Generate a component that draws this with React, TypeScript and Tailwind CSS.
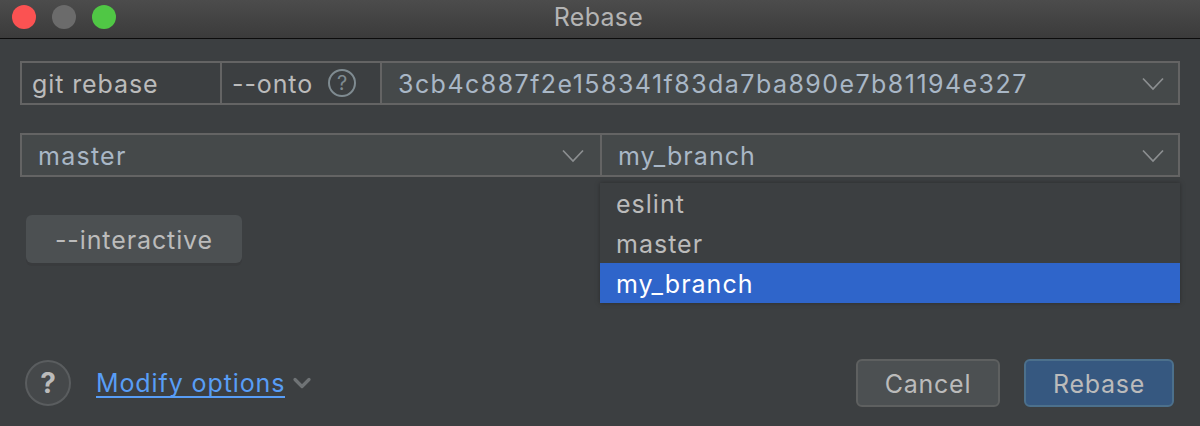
import { ChevronDown } from 'lucide-react'

const font = { fontFamily: 'Inter, "Liberation Sans", sans-serif' }

function Chevron() {
  return (
    <svg width="24" height="16" viewBox="0 0 24 16" fill="none" className="mt-[1px] text-[#8c8f91]">
      <path d="M2 2.5L12 13L22 2.5" stroke="currentColor" strokeWidth="1.7" />
    </svg>
  )
}

function ComboField({ value, className }: { value: string; className: string }) {
  return (
    <div className={`flex items-center justify-between bg-[#45494a] border-[#646464] ${className}`}>
      <span className="pt-[2px]">{value}</span>
      <Chevron />
    </div>
  )
}

export default function App() {
  return (
    <div
      style={font}
      className="relative flex h-[426px] w-[1200px] flex-col overflow-hidden bg-[#3c3f41] text-[25px] leading-none tracking-[0.036em] text-[#bbbbbb]"
    >
      {/* Title bar */}
      <div className="relative flex h-[39px] shrink-0 items-center justify-center border-b border-[#0c0c0c] bg-gradient-to-b from-[#4c4c4c] to-[#3b3b3b] pb-[3px] pr-[3px]">
        <div className="absolute left-3 top-[5px] flex gap-4">
          <span className="h-6 w-6 rounded-full bg-[#fb5252]" />
          <span className="h-6 w-6 rounded-full bg-[#6b6b6b]" />
          <span className="h-6 w-6 rounded-full bg-[#50c745]" />
        </div>
        <span className="tracking-[0.012em] text-[#b4b4b4]">Rebase</span>
      </div>

      <div className="flex flex-1 flex-col px-5">
        {/* git rebase row */}
        <div className="mt-[22px] flex h-11 border-2 border-[#646464]">
          <div className="flex w-[200px] items-center border-r-2 border-[#646464] pl-[10px] pt-[2px]">git rebase</div>
          <div className="flex w-[160px] items-center border-r-2 border-[#646464] pl-[10px]">
            <span className="pt-[2px]">--onto</span>
            <span className="ml-[15px] flex h-7 w-7 items-center justify-center rounded-full border-2 border-[#7f8b91] text-[20px] tracking-normal text-[#7f8b91]">
              ?
            </span>
          </div>
          <ComboField
            value="3cb4c887f2e158341f83da7ba890e7b81194e327"
            className="flex-1 pl-4 pr-[13px] text-[#a9b7c6] tracking-[0.058em]"
          />
        </div>

        {/* Branch row */}
        <div className="mt-[28px] flex h-11 border-2 border-[#646464] text-[#a9b7c6]">
          <ComboField value="master" className="w-[580px] border-r-2 pl-4 pr-[15px] tracking-[0.05em]" />
          <ComboField value="my_branch" className="flex-1 pl-4 pr-[13px] tracking-[0.042em]" />
        </div>

        <button className="ml-[6px] mt-[38px] flex h-12 w-[216px] items-center justify-center rounded-md bg-[#4c5052] pt-[2px] shadow-[0_3px_0_#393b3d]">
          --interactive
        </button>

        {/* Footer */}
        <div className="mt-auto mb-[19px] flex items-center">
          <span className="ml-[5px] flex h-[46px] w-[46px] items-center justify-center rounded-full border-2 border-[#5a5d5f] bg-[#45484a] text-[28px] font-bold tracking-normal">
            ?
          </span>
          <a className="ml-[25px] mt-[3px] border-b-2 border-[#589df6] text-[#589df6]">Modify options</a>
          <ChevronDown size={28} strokeWidth={2.8} className="ml-[3px] text-[#6f7375]" />
          <button className="ml-auto flex h-12 w-[144px] items-center justify-center rounded-md border-2 border-[#5e6060] bg-[#4c5052] pt-[2px] tracking-[0.03em]">
            Cancel
          </button>
          <button className="ml-6 mr-[6px] flex h-12 w-[150px] items-center justify-center rounded-md border-2 border-[#4c708c] bg-[#365880] pt-[2px] tracking-[0.03em]">
            Rebase
          </button>
        </div>
      </div>

      {/* Branch dropdown */}
      <div className="absolute left-[600px] top-[183px] w-[580px] bg-[#3c3f41] shadow-[0_0_4px_#2a2c2d] tracking-[0.04em]">
        <div className="flex h-10 items-center pl-4 pt-[2px]">eslint</div>
        <div className="flex h-10 items-center pl-4 pt-[2px]">master</div>
        <div className="flex h-10 items-center bg-[#2f65ca] pl-4 pt-[2px] text-white">my_branch</div>
      </div>
    </div>
  )
}
